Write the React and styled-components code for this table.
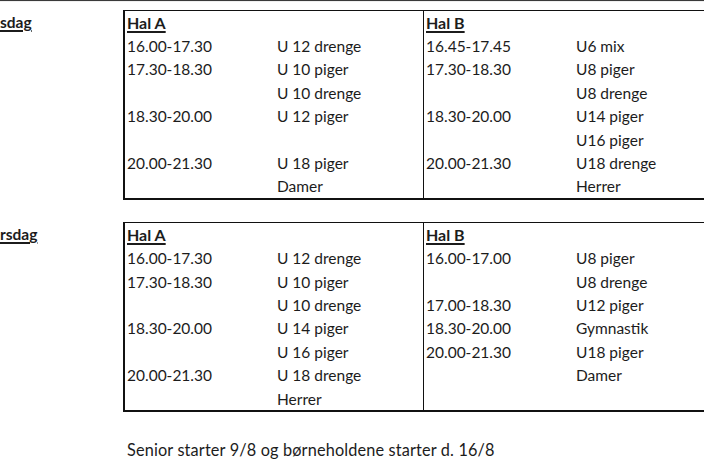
import React from "react";
import styled, { createGlobalStyle } from "styled-components";

const GlobalStyle = createGlobalStyle`
  html, body {
    margin: 0;
    padding: 0;
    background: #ffffff;
    overflow: hidden;
  }
  body {
    font-family: Lato, "Open Sans", "Liberation Sans", sans-serif;
    color: #1c1c1c;
  }
`;

// the screenshot is cropped on the left, only the end of each day name shows
const schedule = [
  {
    day: "sdag",
    halls: [
      {
        name: "Hal A",
        rows: [
          ["16.00-17.30", "U 12 drenge"],
          ["17.30-18.30", "U 10 piger"],
          ["", "U 10 drenge"],
          ["18.30-20.00", "U 12 piger"],
          ["", ""],
          ["20.00-21.30", "U 18 piger"],
          ["", "Damer"],
        ],
      },
      {
        name: "Hal B",
        rows: [
          ["16.45-17.45", "U6 mix"],
          ["17.30-18.30", "U8 piger"],
          ["", "U8 drenge"],
          ["18.30-20.00", "U14 piger"],
          ["", "U16 piger"],
          ["20.00-21.30", "U18 drenge"],
          ["", "Herrer"],
        ],
      },
    ],
  },
  {
    day: "rsdag",
    halls: [
      {
        name: "Hal A",
        rows: [
          ["16.00-17.30", "U 12 drenge"],
          ["17.30-18.30", "U 10 piger"],
          ["", "U 10 drenge"],
          ["18.30-20.00", "U 14 piger"],
          ["", "U 16 piger"],
          ["20.00-21.30", "U 18 drenge"],
          ["", "Herrer"],
        ],
      },
      {
        name: "Hal B",
        rows: [
          ["16.00-17.00", "U8 piger"],
          ["", "U8 drenge"],
          ["17.00-18.30", "U12 piger"],
          ["18.30-20.00", "Gymnastik"],
          ["20.00-21.30", "U18 piger"],
          ["", "Damer"],
          ["", ""],
        ],
      },
    ],
  },
];

export default function App() {
  return (
    <>
      <GlobalStyle />
      <Page>
        <TopRule />
        <Sections>
          {schedule.map((section) => (
            <Section key={section.day}>
              <DayLabel>{section.day}</DayLabel>
              <Table>
                {section.halls.map((hall, i) => (
                  <Hall key={hall.name} divided={i > 0}>
                    <HallName>{hall.name}</HallName>
                    <Cell />
                    {hall.rows.map(([time, group], r) => (
                      <React.Fragment key={r}>
                        <Cell>{time}</Cell>
                        <Cell>{group}</Cell>
                      </React.Fragment>
                    ))}
                  </Hall>
                ))}
              </Table>
            </Section>
          ))}
        </Sections>
        <Note>Senior starter 9/8 og børneholdene starter d. 16/8</Note>
      </Page>
    </>
  );
}

const Page = styled.div`
  width: 704px;
  height: 470px;
  overflow: hidden;
  display: flex;
  flex-direction: column;
`;

const TopRule = styled.div`
  height: 1px;
  background: #3a3a3a;
  border-bottom: 1px solid #f0f0f0;
  margin-bottom: 8px;
`;

const Sections = styled.div`
  display: flex;
  flex-direction: column;
  gap: 22px;
`;

const Section = styled.div`
  display: flex;
  align-items: flex-start;
`;

const DayLabel = styled.div`
  flex: 0 0 123px;
  font-weight: 700;
  font-size: 15.5px;
  line-height: 23.4px;
  padding-top: 1px;
  text-decoration: underline;
  text-underline-offset: 2px;
  text-decoration-thickness: 1.5px;
`;

const Table = styled.div`
  flex: 0 0 auto;
  display: flex;
  border: 2px solid #111;
  border-top-width: 1.5px;
`;

const Hall = styled.div`
  width: 296px;
  display: grid;
  grid-template-columns: 150px 1fr;
  grid-auto-rows: 23.4px;
  align-items: center;
  padding-left: 2px;
  border-left: ${(p) => (p.divided ? "1px solid #111" : "none")};
`;

const Cell = styled.div`
  font-size: 15.5px;
  white-space: nowrap;
`;

const HallName = styled(Cell)`
  font-weight: 700;
  font-size: 16px;
  text-decoration: underline;
  text-underline-offset: 2px;
  text-decoration-thickness: 1.5px;
`;

const Note = styled.div`
  margin-top: 28px;
  padding-left: 127px;
  font-size: 16.3px;
  letter-spacing: 0.15px;
`;
